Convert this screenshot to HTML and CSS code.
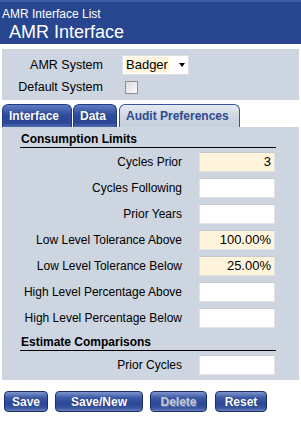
FILE: index.html
```html
<!DOCTYPE html>
<html>
	<head>
		<meta charset="UTF-8">
		<title>AMR Interface</title>
		<link rel="stylesheet" href="styles.css">
	</head>
	<body>
		<header class="page-head">
			<div class="crumb">AMR Interface List</div>
			<h1>AMR Interface</h1>
		</header>

		<div class="top-panel">
			<label class="top-label">AMR System</label>
			<div class="select">
				<span class="select-value">Badger</span>
				<span class="select-arrow"></span>
			</div>
			<label class="top-label">Default System</label>
			<div><span class="checkbox"></span></div>
		</div>

		<ul class="tabs">
			<li class="tab">Interface</li>
			<li class="tab">Data</li>
			<li class="tab active">Audit Preferences</li>
		</ul>

		<div class="panel">
			<section class="group">
				<h2>Consumption Limits</h2>
				<div class="rows">
					<label>Cycles Prior</label><div class="field filled">3</div>
					<label>Cycles Following</label><div class="field"></div>
					<label>Prior Years</label><div class="field"></div>
					<label>Low Level Tolerance Above</label><div class="field filled">100.00%</div>
					<label>Low Level Tolerance Below</label><div class="field filled">25.00%</div>
					<label>High Level Percentage Above</label><div class="field"></div>
					<label>High Level Percentage Below</label><div class="field"></div>
				</div>
			</section>
			<section class="group">
				<h2>Estimate Comparisons</h2>
				<div class="rows">
					<label>Prior Cycles</label><div class="field"></div>
				</div>
			</section>
		</div>

		<div class="buttons">
			<button class="btn btn-save">Save</button>
			<button class="btn btn-savenew">Save/New</button>
			<button class="btn btn-delete">Delete</button>
			<button class="btn btn-reset">Reset</button>
		</div>
	</body>
</html>
```

FILE: styles.css
```css
body {
	margin: 0;
	background: #fff;
	font-family: "Liberation Sans", Arial, sans-serif;
	font-size: 12px;
	color: #000;
}

.page-head {
	height: 42px;
	background: #27468f;
	border-top: 2px solid #3c5da9;
	color: #fff;
}

.crumb {
	padding: 5px 0 0 2px;
	font-size: 12px;
	line-height: 14px;
}

.page-head h1 {
	margin: 0;
	padding-left: 9px;
	font-size: 18px;
	font-weight: normal;
	line-height: 22px;
}

.top-panel {
	margin: 5px 2px 0 2px;
	padding: 4px 0 4px 0;
	height: 43px;
	background: #cdd5e1;
	display: grid;
	grid-template-columns: 101px 80px;
	column-gap: 19px;
	row-gap: 2px;
	align-items: center;
}

.top-label {
	text-align: right;
	font-size: 12.5px;
}

.select {
	width: 63px;
	height: 18px;
	background: #fff;
	border: 1px solid #dcdfe5;
	display: flex;
	align-items: center;
	padding-left: 2px;
	font-size: 13px;
}

.select-value {
	background: #fff4dc;
	padding: 0 1px;
	line-height: 16px;
}

.select-arrow {
	margin-left: 10px;
	width: 0;
	height: 0;
	border-left: 3px solid transparent;
	border-right: 3px solid transparent;
	border-top: 4px solid #000;
}

.checkbox {
	display: block;
	margin-left: 3px;
	width: 11px;
	height: 11px;
	border: 1px solid #8e8f8f;
	background: linear-gradient(135deg, #dcdcdc, #fafafa);
}

.tabs {
	list-style: none;
	margin: 4px 0 0 2px;
	padding: 0;
	display: flex;
	gap: 1px;
	height: 23px;
}

.tab {
	padding: 0 6px;
	border: 1px solid #1f3a80;
	border-bottom: none;
	border-radius: 6px 6px 0 0;
	background: linear-gradient(#5f7cc4, #2d4c9b 45%, #2a4796 80%, #4e6ab0);
	color: #fff;
	font-weight: bold;
	line-height: 22px;
	text-shadow: 0 0 1px #0f2360;
}

.tab:nth-child(1) {
	width: 56px;
}

.tab:nth-child(2) {
	width: 30px;
}

.tab.active {
	margin-left: 1px;
	width: 107px;
	border-color: #3553a0;
	background: linear-gradient(#e6eaf2, #cfd7e3 50%, #c4cddb);
	color: #2f4b90;
	text-shadow: none;
}

.panel {
	margin: 0 2px;
	padding: 3px 0 5px 0;
	background: #cdd5e1;
}

.group + .group {
	margin-top: 5px;
}

.group h2 {
	margin: 0 23px 4px 18px;
	padding: 1px 0 0 1px;
	font-size: 12px;
	line-height: 16px;
	border-bottom: 1px solid #000;
}

.rows {
	display: grid;
	grid-template-columns: 180px 76px;
	column-gap: 17px;
	row-gap: 6px;
	align-items: center;
}

.rows label {
	text-align: right;
	font-size: 12px;
}

.field {
	box-sizing: border-box;
	height: 20px;
	background: #fff;
	border: 1px solid #e2e4e8;
	border-top-color: #c5c9d0;
	padding-right: 3px;
	text-align: right;
	font-size: 13px;
	line-height: 18px;
}

.field.filled {
	background: #fff4dc;
}

.buttons {
	display: flex;
	margin: 11px 0 0 4px;
	gap: 7px;
}

.btn {
	height: 21px;
	padding: 0;
	border: 1px solid #1c2f6c;
	border-radius: 4px;
	background: linear-gradient(#7f95cf, #3d5aa5 30%, #2a4797 60%, #3b57a2 85%, #6b82c0);
	color: #fff;
	font-family: "Liberation Sans", Arial, sans-serif;
	font-size: 12px;
	font-weight: bold;
	text-shadow: 0 0 1px #0f2360;
}

.btn-save {
	width: 44px;
}

.btn-savenew {
	width: 88px;
}

.btn-delete {
	width: 57px;
	color: #c3c9d6;
	text-shadow: 1px 1px 0 #6d7fae;
}

.btn-reset {
	margin-left: 1px;
	width: 52px;
}
```
